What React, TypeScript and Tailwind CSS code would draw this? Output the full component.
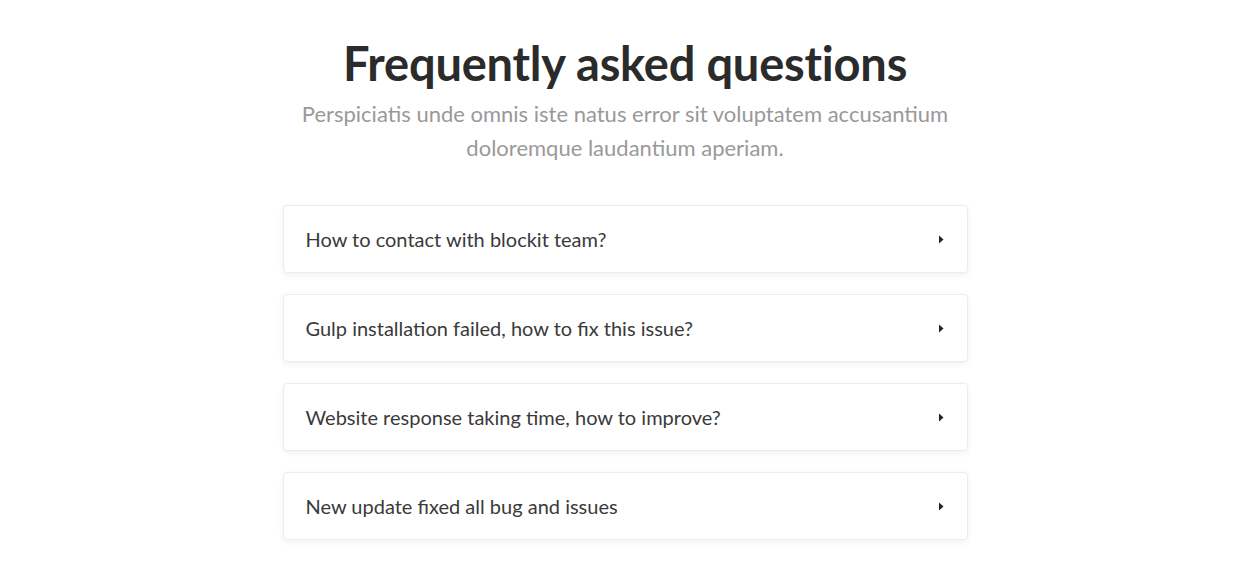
const questions = [
  'How to contact with blockit team?',
  'Gulp installation failed, how to fix this issue?',
  'Website response taking time, how to improve?',
  'New update fixed all bug and issues',
];

const Caret = () => (
  <svg width="6" height="9" viewBox="0 0 6 9" className="text-[#222]">
    <path d="M1 0.5 L5.5 4.5 L1 8.5 Z" fill="currentColor" />
  </svg>
);

export default function App() {
  return (
    <div className="min-h-[581px] bg-white font-['Lato',sans-serif]">
      <div className="mx-auto flex w-[685px] flex-col items-center pt-[33px]">
        <h1 className="text-[47px] font-bold leading-[60px] text-[#2b2b2b] tracking-[-0.2px]">
          Frequently asked questions
        </h1>
        <p className="mt-[4px] w-[680px] text-center text-[22px] leading-[34px] text-[#999999]">
          Perspiciatis unde omnis iste natus error sit voluptatem accusantium doloremque laudantium aperiam.
        </p>
        <div className="mt-[40px] flex w-full flex-col gap-[21px]">
          {questions.map((q) => (
            <div
              key={q}
              className="flex h-[68px] items-center justify-between rounded-[4px] border border-[#ececec] bg-white pl-[22px] pr-[23px] shadow-[0_2px_6px_rgba(0,0,0,0.06)]"
            >
              <span className="text-[20px] text-[#3a3a3a]">{q}</span>
              <Caret />
            </div>
          ))}
        </div>
      </div>
    </div>
  );
}
